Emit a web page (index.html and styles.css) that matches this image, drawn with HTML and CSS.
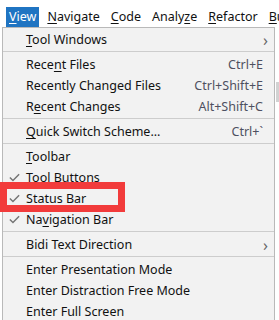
FILE: index.html
```html
<!DOCTYPE html>
<html>
<head>
<meta charset="utf-8">
<link rel="stylesheet" href="styles.css">
</head>
<body>
<div class="screen">
  <div class="topstrip"></div>
  <div class="menubar">
    <span class="mitem active"><u>V</u>iew</span>
    <span class="mitem"><u>N</u>avigate</span>
    <span class="mitem"><u>C</u>ode</span>
    <span class="mitem">Analy<u>z</u>e</span>
    <span class="mitem"><u>R</u>efactor</span>
    <span class="mitem"><u>B</u>uild</span>
  </div>
  <div class="popup">
    <div class="row"><span class="chk"></span><span class="label"><u>T</u>ool Windows</span><span class="arrow">›</span></div>
    <div class="sep"></div>
    <div class="row"><span class="chk"></span><span class="label">Rece<u>n</u>t Files</span><span class="key">Ctrl+E</span></div>
    <div class="row"><span class="chk"></span><span class="label">Recently Changed Files</span><span class="key">Ctrl+Shift+E</span></div>
    <div class="row"><span class="chk"></span><span class="label">R<u>e</u>cent Changes</span><span class="key">Alt+Shift+C</span></div>
    <div class="sep"></div>
    <div class="row"><span class="chk"></span><span class="label"><u>Q</u>uick Switch Scheme...</span><span class="key">Ctrl+`</span></div>
    <div class="sep"></div>
    <div class="row"><span class="chk"></span><span class="label"><u>T</u>oolbar</span></div>
    <div class="row"><span class="chk"><svg viewBox="0 0 10 8" width="10" height="8"><polyline points="0.8,4 3.6,6.8 9.2,1" fill="none" stroke="#747474" stroke-width="1.3"/></svg></span><span class="label">Tool <u>B</u>uttons</span></div>
    <div class="row"><span class="chk"><svg viewBox="0 0 10 8" width="10" height="8"><polyline points="0.8,4 3.6,6.8 9.2,1" fill="none" stroke="#747474" stroke-width="1.3"/></svg></span><span class="label"><u>S</u>tatus Bar</span></div>
    <div class="row"><span class="chk"><svg viewBox="0 0 10 8" width="10" height="8"><polyline points="0.8,4 3.6,6.8 9.2,1" fill="none" stroke="#747474" stroke-width="1.3"/></svg></span><span class="label">Na<u>v</u>igation Bar</span></div>
    <div class="sep"></div>
    <div class="row"><span class="chk"></span><span class="label">Bidi Text Direction</span><span class="arrow">›</span></div>
    <div class="sep"></div>
    <div class="row"><span class="chk"></span><span class="label">Enter Presentation Mode</span></div>
    <div class="row"><span class="chk"></span><span class="label">Enter Distraction Free Mode</span></div>
    <div class="row"><span class="chk"></span><span class="label">Enter Full Screen</span></div>
  </div>
  <div class="scrollthumb"></div>
  <div class="highlight-box"></div>
</div>
</body>
</html>
```

FILE: styles.css
```css
html, body {
  margin: 0;
  padding: 0;
  background: #ffffff;
  overflow: hidden;
}
.screen {
  position: relative;
  width: 279px;
  height: 320px;
  overflow: hidden;
  font-family: "Noto Sans", "Open Sans", sans-serif;
  font-size: 12.5px;
  color: #111;
}
.topstrip {
  height: 7px;
}
.menubar {
  display: flex;
  height: 20px;
  padding-left: 6px;
  gap: 5px;
  white-space: nowrap;
  font-size: 12.5px;
}
.mitem {
  display: flex;
  align-items: center;
  padding: 0 3px;
  line-height: 20px;
}
.mitem.active {
  background: #1f74c2;
  color: #fff;
}
.mitem u {
  text-underline-offset: 2px;
}
.popup {
  margin-left: 2px;
  width: 271px;
  border: 1px solid #b9b9b9;
  border-bottom: none;
  background: #f2f2f2;
  padding-top: 1px;
  height: 320px;
}
.row {
  display: flex;
  align-items: center;
  height: 21px;
  padding-right: 11px;
  white-space: nowrap;
}
.chk {
  width: 23px;
  flex: none;
  display: flex;
  align-items: center;
  padding-left: 6px;
  box-sizing: border-box;
}
.chk svg {
  display: block;
  width: 11px;
  height: 9px;
}
.label {
  flex: 1;
}
.label u {
  text-underline-offset: 2px;
}
.key {
  color: #4e5060;
}
.arrow {
  color: #666;
  font-size: 16px;
  margin-right: -5px;
  line-height: 16px;
}
.sep {
  height: 1px;
  background: #cdcdcd;
  margin: 1px 0 2px;
}
.scrollthumb {
  position: absolute;
  left: 276px;
  top: 82px;
  width: 3px;
  height: 20px;
  background: #d2d2d2;
}
.highlight-box {
  position: absolute;
  left: 0;
  top: 182px;
  width: 125px;
  height: 30px;
  box-sizing: border-box;
  border: 7px solid #f23b3b;
}
```
